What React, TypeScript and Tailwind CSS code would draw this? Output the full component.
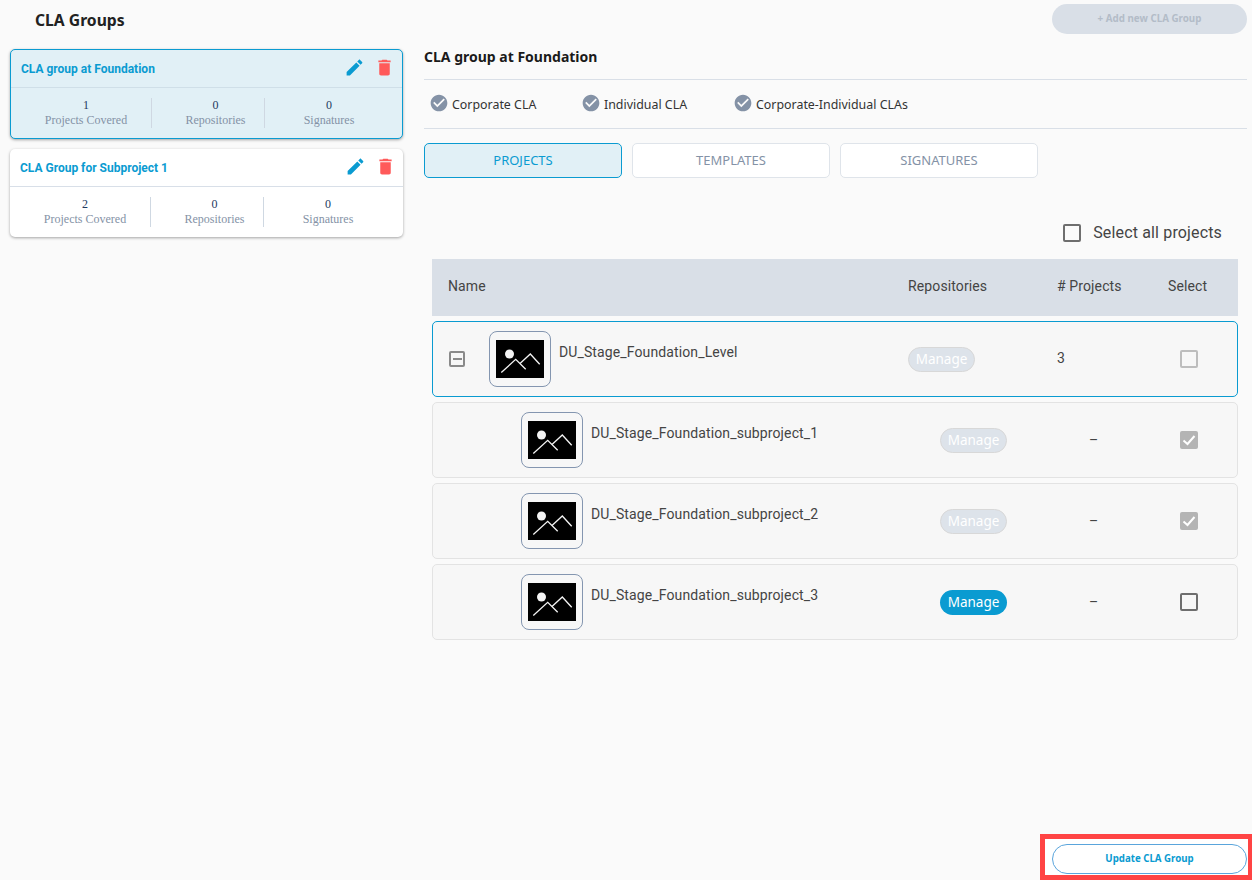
const BLUE = '#0a9bd1'

const CheckCircle = () => (
  <svg viewBox="0 0 24 24" className="w-[20px] h-[20px] -mt-[2px] fill-[#8492a6] shrink-0">
    <path d="M12 2C6.48 2 2 6.48 2 12s4.48 10 10 10 10-4.48 10-10S17.52 2 12 2zm-2 15l-5-5 1.41-1.41L10 14.17l7.59-7.59L19 8l-9 9z" />
  </svg>
)

const EditIcon = () => (
  <svg viewBox="0 0 24 24" className="w-[21px] h-[21px]" fill={BLUE}>
    <path d="M3 17.25V21h3.75L17.81 9.94l-3.75-3.75L3 17.25zM20.71 7.04c.39-.39.39-1.02 0-1.41l-2.34-2.34c-.39-.39-1.02-.39-1.41 0l-1.83 1.83 3.75 3.75 1.83-1.83z" />
  </svg>
)

const TrashIcon = () => (
  <svg viewBox="0 0 24 24" className="w-[21px] h-[21px] fill-[#ff5a5a]">
    <path d="M6 19c0 1.1.9 2 2 2h8c1.1 0 2-.9 2-2V7H6v12zM19 4h-3.5l-1-1h-5l-1 1H5v2h14V4z" />
  </svg>
)

const ProjectLogo = () => (
  <div className="w-[62px] h-[56px] shrink-0 rounded-[8px] border border-[#8496b0] flex items-center justify-center">
    <svg viewBox="0 0 48 38" className="w-[48px] h-[38px]">
      <rect width="48" height="38" fill="#000" />
      <circle cx="13.5" cy="14" r="4.5" fill="#f4f4f4" />
      <polyline points="5.3,32.5 19.7,19.3 29.7,29.3" fill="none" stroke="#f4f4f4" strokeWidth="1.3" />
      <polyline points="24,23.5 34.3,14 43.7,24.3" fill="none" stroke="#f4f4f4" strokeWidth="1.3" />
    </svg>
  </div>
)

const Stat = ({ value, label, className, last }: { value: number; label: string; className: string; last?: boolean }) => (
  <div className={`${className} h-[30px] text-center leading-[15px] text-[12px] ${last ? '' : 'border-r border-[#cfd8e2]'}`}>
    <div className="text-[#1e3a5f]">{value}</div>
    <div className="text-[#8492a6]">{label}</div>
  </div>
)

const GroupCard = ({
  title,
  projects,
  active,
}: {
  title: string
  projects: number
  active?: boolean
}) => (
  <div
    className={`rounded-[5px] shadow-[0_1px_3px_rgba(0,0,0,0.35)] ${
      active ? 'bg-[#e1f0f6] border border-[#0a9bd1] h-[90px] mb-[10px]' : 'bg-white h-[88px]'
    }`}
  >
    <div
      className={`flex items-center justify-between font-bold text-[12px] text-[#0a9bd1] h-[38px] pl-[10px] pr-[7px] border-b ${
        active ? 'border-[#cfdfe8]' : 'border-[#d8dfe8]'
      }`}
      style={{ fontFamily: 'Roboto, sans-serif' }}
    >
      <span>{title}</span>
      <div className="flex gap-[9px] -mt-[3px]">
        <EditIcon />
        <TrashIcon />
      </div>
    </div>
    <div className="flex pt-[10px]" style={{ fontFamily: '"Liberation Serif", serif' }}>
      <Stat value={projects} label="Projects Covered" className="w-[141px] pl-[10px]" />
      <Stat value={0} label="Repositories" className="w-[113px] pl-[15px]" />
      <Stat value={0} label="Signatures" className="w-[128px]" last />
    </div>
  </div>
)

const Checkbox = ({ state }: { state: 'empty' | 'checked' | 'active' }) => {
  if (state === 'checked') {
    return (
      <div className="w-[18px] h-[18px] rounded-[2px] bg-[#b4b4b4] flex items-center justify-center">
        <svg viewBox="0 0 18 18" className="w-[18px] h-[18px]">
          <polyline points="3.5,9.5 7.5,13 14.5,5" fill="none" stroke="#fff" strokeWidth="2" />
        </svg>
      </div>
    )
  }
  return (
    <div
      className={`w-[18px] h-[18px] rounded-[2px] border-2 ${
        state === 'active' ? 'border-[#6e6e6e]' : 'border-[#bdbdbd]'
      }`}
    />
  )
}

const ManageButton = ({ enabled }: { enabled?: boolean }) => (
  <span
    className={`inline-flex items-center justify-center w-[67px] h-[25px] rounded-full text-[13.5px] tracking-normal ${
      enabled ? 'bg-[#0a9bd1] text-white' : 'bg-[#dde3ea] text-white border border-[#d8d8d8]'
    }`}
    style={{ fontFamily: '"Noto Sans", sans-serif' }}
  >
    Manage
  </span>
)

const subprojects = [
  { name: 'DU_Stage_Foundation_subproject_1', check: 'checked' as const, enabled: false },
  { name: 'DU_Stage_Foundation_subproject_2', check: 'checked' as const, enabled: false },
  { name: 'DU_Stage_Foundation_subproject_3', check: 'active' as const, enabled: true },
]

export default function App() {
  return (
    <div className="relative flex w-[1254px] h-[880px] overflow-hidden bg-[#fafafa] border-r-2 border-white" style={{ fontFamily: 'Roboto, sans-serif' }}>
      {/* Left column */}
      <aside className="w-[393px] ml-[10px] shrink-0">
        <h1
          className="h-[49px] pl-[25px] pt-[7px] text-[15.7px] leading-[27px] font-bold text-[#222]"
          style={{ fontFamily: '"Noto Sans", sans-serif' }}
        >
          CLA Groups
        </h1>
        <GroupCard title="CLA group at Foundation" projects={1} active />
        <GroupCard title="CLA Group for Subproject 1" projects={2} />
      </aside>

      {/* Right column */}
      <main className="w-[823px] ml-[21px] flex flex-col h-full">
        <div className="flex justify-end pt-[4px] h-[34px]">
          <button
            className="w-[195px] h-[30px] rounded-full bg-[#d9dfe7] text-[9.8px] font-bold text-[#b3bcc8]"
            style={{ fontFamily: '"Noto Sans", sans-serif' }}
          >
            + Add new CLA Group
          </button>
        </div>

        <div style={{ fontFamily: '"Noto Sans", sans-serif' }}>
          <h2 className="h-[46px] pt-[11px] text-[14px] leading-[24px] font-bold text-[#1a1a1a] border-b border-[#d9dfe7]">
            CLA group at Foundation
          </h2>
          <div className="flex items-center h-[49px] pl-[5px] text-[12.4px] text-[#333] border-b border-[#d9dfe7]">
            <div className="flex items-center gap-[3px] w-[152px]">
              <CheckCircle />
              <span className="pt-[2px]">Corporate CLA</span>
            </div>
            <div className="flex items-center gap-[3px] w-[152px]">
              <CheckCircle />
              <span className="pt-[2px]">Individual CLA</span>
            </div>
            <div className="flex items-center gap-[3px]">
              <CheckCircle />
              <span className="pt-[2px]">Corporate-Individual CLAs</span>
            </div>
          </div>
          <div className="flex gap-[10px] mt-[14px] text-[13px]">
            <div className="w-[198px] h-[35px] rounded-[5px] border border-[#0a9bd1] bg-[#e1f0f6] text-[#0a9bd1] flex items-center justify-center">
              PROJECTS
            </div>
            <div className="w-[198px] h-[35px] rounded-[5px] border border-[#dfe4ea] bg-white text-[#8492a6] flex items-center justify-center">
              TEMPLATES
            </div>
            <div className="w-[198px] h-[35px] rounded-[5px] border border-[#dfe4ea] bg-white text-[#8492a6] flex items-center justify-center">
              SIGNATURES
            </div>
          </div>
        </div>

        <div className="flex items-center justify-end gap-[12px] h-[36px] mt-[37px] pr-[25px] text-[16px] tracking-[0.15px] text-[#444]">
          <Checkbox state="active" />
          <span>Select all projects</span>
        </div>

        {/* Table */}
        <div className="w-[806px] ml-[8px] mt-[8px] text-[14px] tracking-[0.12px] text-[#444]">
          <div className="flex items-center h-[57px] bg-[#d9dfe7] pl-[16px] pb-[2px]">
            <div className="w-[460px]">Name</div>
            <div className="w-[149px]">Repositories</div>
            <div className="w-[111px]"># Projects</div>
            <div>Select</div>
          </div>

          <div className="mt-[5px] flex flex-col gap-[5px]">
            <div className="flex items-center h-[76px] rounded-[5px] border border-[#0a9bd1] bg-[#f7f7f7] pl-[16px]">
              <div className="w-[16px] h-[16px] rounded-[2px] border-2 border-[#8a8a8a] flex items-center justify-center shrink-0">
                <div className="w-[9px] h-[2px] bg-[#8a8a8a]" />
              </div>
              <div className="ml-[24px]">
                <ProjectLogo />
              </div>
              <div className="w-[349px] ml-[8px] -mt-[14px] shrink-0">DU_Stage_Foundation_Level</div>
              <div className="w-[149px]">
                <ManageButton />
              </div>
              <div className="w-[123px] -mt-[2px]">3</div>
              <Checkbox state="empty" />
            </div>

            {subprojects.map((p) => (
              <div key={p.name} className="flex items-center h-[76px] rounded-[5px] border border-[#e3e3e3] bg-[#f7f7f7] pl-[88px]">
                <ProjectLogo />
                <div className="w-[349px] ml-[8px] -mt-[14px] shrink-0">{p.name}</div>
                <div className="w-[149px]">
                  <ManageButton enabled={p.enabled} />
                </div>
                <div className="w-[91px]">–</div>
                <Checkbox state={p.check} />
              </div>
            ))}
          </div>
        </div>

        <div className="mt-auto flex justify-end pb-[6px]">
          <button
            className="relative z-10 w-[195px] h-[30px] rounded-full bg-white border border-[#5aa5dc] text-[9.7px] font-bold text-[#0a9bd1]"
            style={{ fontFamily: '"Noto Sans", sans-serif' }}
          >
            Update CLA Group
          </button>
        </div>
      </main>

      {/* Annotation box around the update button */}
      <div className="absolute left-[1040px] top-[834px] w-[213px] h-[46px] border-[5px] border-[#ff4444] bg-white" />
    </div>
  )
}
